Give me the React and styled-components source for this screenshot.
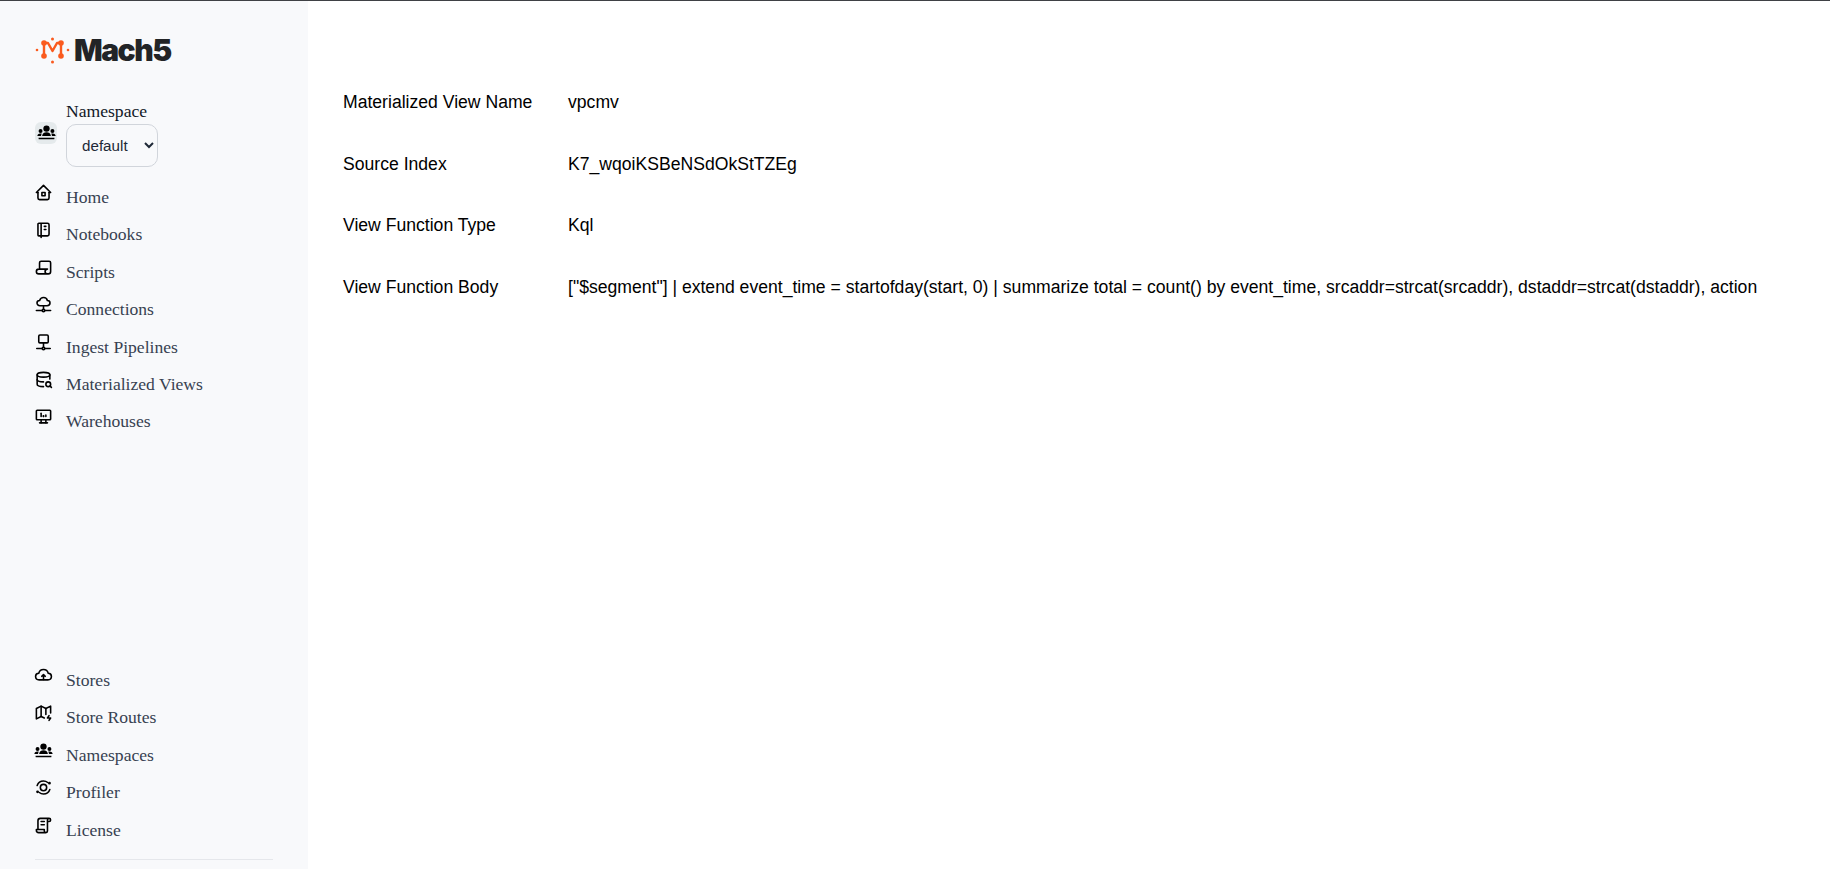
import React from "react"
import styled, { createGlobalStyle } from "styled-components"
import {
  TbHome2,
  TbNotebook,
  TbScript,
  TbDatabaseSearch,
  TbDeviceDesktopAnalytics,
  TbMapBolt,
  TbLicense,
} from "react-icons/tb"

const GlobalStyle = createGlobalStyle`
  html, body {
    margin: 0;
    padding: 0;
    height: 100%;
    overflow: hidden;
    background: #fff;
  }
`

const Stroke = ({ children }) => (
  <svg width="1em" height="1em" viewBox="0 0 24 24" fill="none" stroke="currentColor" strokeWidth="2" strokeLinecap="round" strokeLinejoin="round">
    {children}
  </svg>
)

const ConnectionIcon = () => (
  <Stroke>
    <path d="M7.5 13.5c-2.2 0-3.7-1.5-3.7-3.3s1.4-3.2 3.3-3.2c.7-2.4 2.7-3.8 5-3.8s4.300 1.500 4.800 3.800c1.900 0 3.300 1.400 3.300 3.200s-1.500 3.300-3.700 3.300z" />
    <path d="M12 13.500v4" />
    <circle cx="12" cy="19.500" r="1.600" />
    <path d="M3 19.500h7.400M13.600 19.500h7.400" />
  </Stroke>
)

const PipelineIcon = () => (
  <Stroke>
    <rect x="6" y="2.500" width="12" height="10" rx="1.500" />
    <path d="M12 12.500v5" />
    <circle cx="12" cy="19.500" r="1.600" />
    <path d="M3.500 19.500h6.900M13.600 19.500h6.900" />
  </Stroke>
)

const CloudUpIcon = () => (
  <Stroke>
    <path d="M6.500 17.500C3.900 17.500 2 15.600 2 13.300s1.700-4 4-4.100C6.800 6.200 9.200 4.500 12 4.500s5.200 1.700 6 4.700c2.300.1 4 1.800 4 4.100s-1.900 4.200-4.500 4.200z" />
    <path d="M12 17v-6M9.800 13 12 10.800l2.200 2.200" />
  </Stroke>
)

const ProfilerIcon = () => (
  <Stroke>
    <circle cx="12" cy="12" r="4" />
    <path d="M4 9.500C5.200 6 8.300 3.800 12 3.800c2 0 3.900.7 5.300 1.900" />
    <path d="M20 14.500c-1.200 3.500-4.300 5.700-8 5.700-2 0-3.900-.7-5.300-1.900" />
    <circle cx="19.500" cy="6.500" r=".8" fill="currentColor" />
    <circle cx="4.500" cy="17.500" r=".8" fill="currentColor" />
  </Stroke>
)

const PeopleIcon = () => (
  <svg width="1em" height="1em" viewBox="0 0 24 24" fill="currentColor">
    <circle cx="12" cy="7" r="4" />
    <circle cx="4.500" cy="10" r="2.500" />
    <circle cx="19.500" cy="10" r="2.500" />
    <path d="M6.500 16.500c0-3 2.400-4.700 5.500-4.700s5.500 1.700 5.500 4.700z" />
    <path d="M.5 16.500c0-1.800 1.300-3.200 3.800-3.200.7 0 1.300.1 1.800.3-.7.800-1 1.800-1 2.900zM23.500 16.500c0-1.800-1.300-3.200-3.800-3.200-.7 0-1.300.1-1.800.3.700.8 1 1.800 1 2.900z" />
    <path d="M2 18.500h20v1.300c0 .4-.3.700-.7.700H2.700c-.4 0-.7-.3-.7-.7z" />
  </svg>
)

const Logo = () => (
  <svg width="35" height="27" viewBox="0 0 35 27" fill="#fa5a1e">
    <path d="M9 6v13M26 6v13M9 6h4l4.500 8L22 6h4" fill="none" stroke="#fa5a1e" strokeWidth="2.400" strokeLinejoin="round" />
    <circle cx="9" cy="6" r="2.800" />
    <circle cx="26" cy="6" r="2.800" />
    <circle cx="9" cy="19" r="2.800" />
    <circle cx="26" cy="19" r="2.800" />
    <circle cx="17.500" cy="2" r="1.500" />
    <circle cx="17.500" cy="25" r="1.500" />
    <circle cx="2" cy="13" r="1.300" />
    <circle cx="33" cy="13" r="1.300" />
  </svg>
)

const topItems = [
  { label: "Home", icon: <TbHome2 /> },
  { label: "Notebooks", icon: <TbNotebook /> },
  { label: "Scripts", icon: <TbScript /> },
  { label: "Connections", icon: <ConnectionIcon /> },
  { label: "Ingest Pipelines", icon: <PipelineIcon /> },
  { label: "Materialized Views", icon: <TbDatabaseSearch /> },
  { label: "Warehouses", icon: <TbDeviceDesktopAnalytics /> },
]

const bottomItems = [
  { label: "Stores", icon: <CloudUpIcon /> },
  { label: "Store Routes", icon: <TbMapBolt /> },
  { label: "Namespaces", icon: <PeopleIcon /> },
  { label: "Profiler", icon: <ProfilerIcon /> },
  { label: "License", icon: <TbLicense /> },
]

const details = [
  { name: "Materialized View Name", value: "vpcmv" },
  { name: "Source Index", value: "K7_wqoiKSBeNSdOkStTZEg" },
  { name: "View Function Type", value: "Kql" },
  {
    name: "View Function Body",
    value:
      '["$segment"] | extend event_time = startofday(start, 0) | summarize total = count() by event_time, srcaddr=strcat(srcaddr), dstaddr=strcat(dstaddr), action',
  },
]

const NavList = ({ items }) => (
  <Nav>
    {items.map((item) => (
      <NavItem key={item.label}>
        <NavIcon>{item.icon}</NavIcon>
        <NavLabel>{item.label}</NavLabel>
      </NavItem>
    ))}
  </Nav>
)

const App = () => {
  return (
    <Page>
      <GlobalStyle />
      <Sidebar>
        <Brand>
          <Logo />
          <BrandName>Mach5</BrandName>
        </Brand>
        <NamespacePicker>
          <NamespaceBadge>
            <PeopleIcon />
          </NamespaceBadge>
          <NamespaceField>
            <NamespaceLabel>Namespace</NamespaceLabel>
            <NamespaceSelect defaultValue="default">
              <option value="default">default</option>
            </NamespaceSelect>
          </NamespaceField>
        </NamespacePicker>
        <NavList items={topItems} />
        <BottomGroup>
          <NavList items={bottomItems} />
          <Divider />
        </BottomGroup>
      </Sidebar>
      <Main>
        {details.map((row) => (
          <DetailRow key={row.name}>
            <DetailName>{row.name}</DetailName>
            <DetailValue>{row.value}</DetailValue>
          </DetailRow>
        ))}
      </Main>
    </Page>
  )
}

export default App

const Page = styled.div`
  display: flex;
  height: 869px;
  box-sizing: border-box;
  border-top: 1px solid #3f4145;
  overflow: hidden;
`

const Sidebar = styled.aside`
  width: 308px;
  flex-shrink: 0;
  box-sizing: border-box;
  padding: 32px 35px 9px;
  display: flex;
  flex-direction: column;
  background: #f8f9fb;
  font-family: "Liberation Serif", serif;
`

const Brand = styled.div`
  display: flex;
  align-items: center;
  gap: 4px;
  height: 34px;
`

const BrandName = styled.span`
  font-family: Inter, sans-serif;
  font-size: 30px;
  font-weight: 900;
  letter-spacing: -1.5px;
  color: #222426;
`

const NamespacePicker = styled.div`
  display: flex;
  align-items: center;
  gap: 9px;
  margin-top: 35px;
`

const NamespaceBadge = styled.div`
  width: 22px;
  height: 22px;
  margin-bottom: 4px;
  border-radius: 6px;
  background: #e5eaec;
  display: flex;
  align-items: center;
  justify-content: center;
  font-size: 19px;
  color: #000;
`

const NamespaceField = styled.div`
  display: flex;
  flex-direction: column;
`

const NamespaceLabel = styled.label`
  font-size: 17.6px;
  line-height: 18px;
  margin-bottom: 4px;
  color: #111827;
`

const NamespaceSelect = styled.select`
  width: 92px;
  height: 43px;
  padding: 0 8px 0 11px;
  border: 1px solid #d1d5db;
  border-radius: 10px;
  background: #f8f9fb;
  color: #1f2937;
  font-family: "Liberation Sans", sans-serif;
  font-size: 15.2px;
`

const Nav = styled.nav`
  display: flex;
  flex-direction: column;
`

const NavItem = styled.div`
  display: flex;
  align-items: flex-start;
  gap: 13px;
  height: 37.4px;
  &:first-child {
    margin-top: 15px;
  }
`

const NavIcon = styled.span`
  width: 19px;
  height: 19px;
  margin: 1px 0 0 -1px;
  display: flex;
  font-size: 19px;
  color: #000;
`

const NavLabel = styled.span`
  font-size: 17.6px;
  line-height: 24px;
  margin-top: 3px;
  color: #374151;
`

const BottomGroup = styled.div`
  margin-top: auto;
`

const Divider = styled.div`
  height: 1px;
  margin-top: 7px;
  background: #e5e7eb;
`

const Main = styled.main`
  flex: 1;
  padding: 91px 35px 0;
  display: flex;
  flex-direction: column;
  gap: 40.6px;
  font-family: "Liberation Sans", sans-serif;
  font-size: 17.6px;
  color: #000;
`

const DetailRow = styled.div`
  display: flex;
  line-height: 21px;
`

const DetailName = styled.div`
  width: 225px;
  flex-shrink: 0;
`

const DetailValue = styled.div`
  white-space: nowrap;
`
